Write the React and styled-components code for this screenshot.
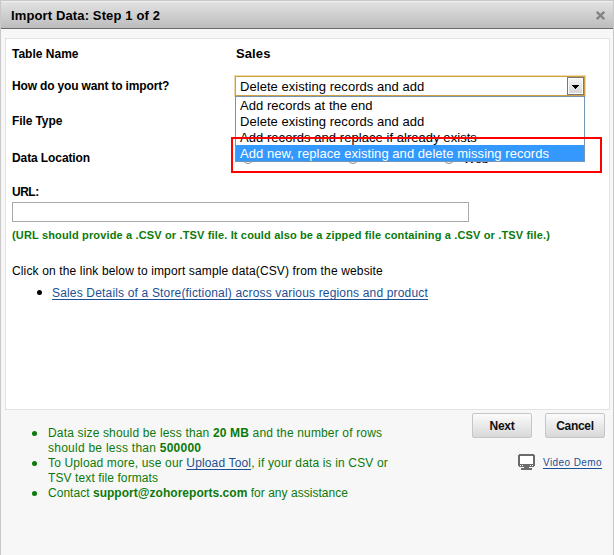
import React from "react";
import styled, { createGlobalStyle } from "styled-components";

const GlobalStyle = createGlobalStyle`
    * {
        box-sizing: border-box;
    }
    body {
        margin: 0;
        background: #f7f7f7;
        font-family: "Liberation Sans", Arial, sans-serif;
        font-size: 12px;
        color: #000;
    }
`;
const Dialog = styled.div`
    width: 614px;
    height: 555px;
    overflow: hidden;
    border: 1px solid #c8c8c8;
    border-bottom: 0;
    background: #f7f7f7;
`;
const Header = styled.header`
    display: flex;
    align-items: center;
    justify-content: space-between;
    height: 28px;
    padding: 1px 8px 0 10px;
    border-top: 1px solid #f0f0f0;
    border-bottom: 1px solid #6c6969;
    background: linear-gradient(#e2e2e2, #bcbcbc);
`;
const Title = styled.h1`
    margin: 0;
    font-size: 13px;
    font-weight: bold;
    letter-spacing: 0.13px;
    white-space: nowrap;
`;
const CloseIcon = styled.svg`
    display: block;
    width: 9px;
    height: 9px;
`;
const Panel = styled.section`
    position: relative;
    height: 372px;
    margin: 9px 3px 0 4px;
    padding: 3px 0 0 6px;
    border: 1px solid #e2e2e2;
    background: #fff;
`;
const Row = styled.div`
    display: grid;
    grid-template-columns: 223px 1fr;
    align-items: center;
    height: ${({ $height }) => $height}px;
`;
const Label = styled.div`
    font-weight: bold;
    white-space: nowrap;
    letter-spacing: ${({ $spacing }) => $spacing || 0}px;
`;
const TableName = styled.div`
    padding-left: 1px;
    font-size: 13px;
    font-weight: bold;
    letter-spacing: 0.1px;
`;
const Select = styled.div`
    position: relative;
    display: flex;
    align-items: center;
    justify-content: space-between;
    width: 350px;
    height: 20px;
    padding-left: 4px;
    border: 1px solid #cf9f45;
    background: #fff;
    box-shadow: 0 0 0 1px #f0d9a8;
    font-size: 13px;
    white-space: nowrap;
    letter-spacing: 0.05px;
`;
const Arrow = styled.span`
    display: flex;
    align-items: center;
    justify-content: center;
    width: 17px;
    height: 18px;
    padding-top: 1px;
    border: 1px solid #777;
    background: linear-gradient(#f6f6f6, #d4d4d4);
    box-shadow: inset 0 0 0 1px #fff;
`;
const Menu = styled.ul`
    position: absolute;
    z-index: 1;
    top: 19px;
    left: -1px;
    width: 350px;
    margin: 0;
    padding: 0;
    border: 1px solid #7494b4;
    background: #fff;
    list-style: none;
`;
const Option = styled.li`
    height: 16px;
    padding: 1px 0 0 4px;
    line-height: 16px;
    color: ${({ $active }) => ($active ? "#fff" : "#000")};
    background: ${({ $active }) => ($active ? "#3399ff" : "#fff")};
`;
const Sources = styled.div`
    display: grid;
    grid-template-columns: 105px 96px 1fr;
    align-items: center;
    padding-left: 7px;
    font-size: 13px;
`;
const Source = styled.span`
    display: flex;
    align-items: center;
    gap: 8px;
`;
const SourceName = styled.span`
    padding-top: 2px;
    letter-spacing: -0.3px;
`;
const Radio = styled.i`
    width: 12px;
    height: 12px;
    border: 1px solid #999;
    border-radius: 50%;
    background: #eee;
`;
const Highlight = styled.div`
    position: absolute;
    z-index: 2;
    top: 98px;
    left: 225px;
    width: 371px;
    height: 36px;
    border: 2px solid #f00;
`;
const UrlInput = styled.input`
    display: block;
    width: 457px;
    height: 20px;
    padding: 0 4px;
    border: 1px solid #aaa;
    background: #fff;
`;
const Hint = styled.p`
    margin: 0;
    height: 26px;
    line-height: 26px;
    font-size: 11px;
    font-weight: bold;
    color: #0b7a0b;
    white-space: nowrap;
    letter-spacing: 0.15px;
`;
const Sample = styled.p`
    margin: 10px 0 0;
    height: 24px;
    line-height: 26px;
    white-space: nowrap;
    letter-spacing: 0.14px;
`;
const SampleList = styled.ul`
    margin: 0;
    padding-left: 25px;
    line-height: 22px;
    list-style: none;
`;
const Item = styled.li`
    display: flex;
    gap: ${({ $gap }) => $gap}px;

    &::before {
        content: "";
        width: 5px;
        height: 5px;
        margin-top: ${({ $drop }) => $drop}px;
        border-radius: 50%;
        background: currentColor;
    }
`;
const Link = styled.a`
    color: #1c4f93;
    font-size: ${({ $size }) => $size || 12}px;
    letter-spacing: ${({ $spacing }) => $spacing || 0}px;
    white-space: nowrap;
    text-decoration: underline;
    text-underline-offset: 2px;
    text-decoration-thickness: 1px;
`;
const Footer = styled.footer`
    display: flex;
    justify-content: space-between;
    padding: 3px 8px 0 7px;
`;
const Notes = styled.ul`
    margin: 13px 0 0;
    padding-left: 24px;
    line-height: 15px;
    color: #0b7a0b;
    white-space: nowrap;
    list-style: none;
`;
const Note = styled.div`
    letter-spacing: ${({ $spacing }) => $spacing || 0}px;
`;
const Actions = styled.div`
    display: flex;
    flex-direction: column;
    align-items: flex-end;
`;
const Buttons = styled.div`
    display: flex;
    gap: 13px;
`;
const Button = styled.button`
    width: 60px;
    height: 25px;
    padding: 1px 0 0;
    border: 1px solid #c6c6c6;
    border-radius: 2px;
    background: linear-gradient(#fcfcfc, #d8d8d8);
    font: bold 12px "Liberation Sans", Arial, sans-serif;
    letter-spacing: -0.3px;
    color: #111;
`;
const Demo = styled.div`
    display: flex;
    align-items: center;
    gap: 8px;
    width: 87px;
    margin-top: 16px;
`;

const options = [
    "Add records at the end",
    "Delete existing records and add",
    "Add records and replace if already exists",
    "Add new, replace existing and delete missing records",
];

const ImportMode = () => (
    <Select>
        <span>{options[1]}</span>
        <Arrow>
            <svg width="7" height="4" shapeRendering="crispEdges">
                <path d="M0 0h7v1H0zM1 1h5v1H1zM2 2h3v1H2zM3 3h1v1H3z" />
            </svg>
        </Arrow>
        <Menu>
            {options.map((option, i) => (
                <Option key={option} $active={i === 3}>{option}</Option>
            ))}
        </Menu>
    </Select>
);

const MonitorIcon = () => (
    <svg width="17" height="16" viewBox="0 0 17 16" fill="#6b6b6b" shapeRendering="crispEdges">
        <path fill="#fff" d="M2 2h13v8H2z" />
        <path fillRule="evenodd" d="M1 0h15v1h1v11h-1v1h-5v1h3v2H3v-2h3v-1H1v-1H0V1h1zM2 2v8h13V2zM2 11v1h1v-1zM4 11v1h1v-1zM12 11v1h1v-1zM14 11v1h1v-1z" />
    </svg>
);

const App = () => (
    <>
        <GlobalStyle />
        <Dialog>
            <Header>
                <Title>Import Data: Step 1 of 2</Title>
                <CloseIcon viewBox="0 0 9 9">
                    <path d="M0.8 0.8l7.4 7.4M8.2 0.8l-7.4 7.4" stroke="#858585" strokeWidth="2.4" />
                </CloseIcon>
            </Header>
            <Panel>
                <Row $height={23}>
                    <Label>Table Name</Label>
                    <TableName>Sales</TableName>
                </Row>
                <Row $height={42}>
                    <Label $spacing={-0.16}>How do you want to import?</Label>
                    <ImportMode />
                </Row>
                <Row $height={27}>
                    <Label $spacing={-0.1}>File Type</Label>
                </Row>
                <Row $height={47}>
                    <Label $spacing={-0.1}>Data Location</Label>
                    <Sources>
                        <Source><Radio /></Source>
                        <Source><Radio /></Source>
                        <Source><Radio /><SourceName>Web</SourceName></Source>
                    </Sources>
                </Row>
                <Row $height={21}>
                    <Label $spacing={-0.5}>URL:</Label>
                </Row>
                <UrlInput />
                <Hint>(URL should provide a .CSV or .TSV file. It could also be a zipped file containing a .CSV or .TSV file.)</Hint>
                <Sample>Click on the link below to import sample data(CSV) from the website</Sample>
                <SampleList>
                    <Item $gap={10} $drop={8}>
                        <Link $spacing={0.168}>Sales Details of a Store(fictional) across various regions and product</Link>
                    </Item>
                </SampleList>
                <Highlight />
            </Panel>
            <Footer>
                <Notes>
                    <Item $gap={11} $drop={5}>
                        <div>
                            <Note $spacing={0.16}>Data size should be less than <b>20 MB</b> and the number of rows</Note>
                            <Note $spacing={0.25}>should be less than <b>500000</b></Note>
                        </div>
                    </Item>
                    <Item $gap={11} $drop={5}>
                        <div>
                            <Note $spacing={0.15}>To Upload more, use our <Link $spacing={0.15}>Upload Tool</Link>, if your data is in CSV or</Note>
                            <Note $spacing={0.1}>TSV text file formats</Note>
                        </div>
                    </Item>
                    <Item $gap={11} $drop={5}>
                        <Note $spacing={0.03}>Contact <b>support@zohoreports.com</b> for any assistance</Note>
                    </Item>
                </Notes>
                <Actions>
                    <Buttons>
                        <Button>Next</Button>
                        <Button>Cancel</Button>
                    </Buttons>
                    <Demo>
                        <MonitorIcon />
                        <Link $size={10} $spacing={0.42}>Video Demo</Link>
                    </Demo>
                </Actions>
            </Footer>
        </Dialog>
    </>
);

export default App;
